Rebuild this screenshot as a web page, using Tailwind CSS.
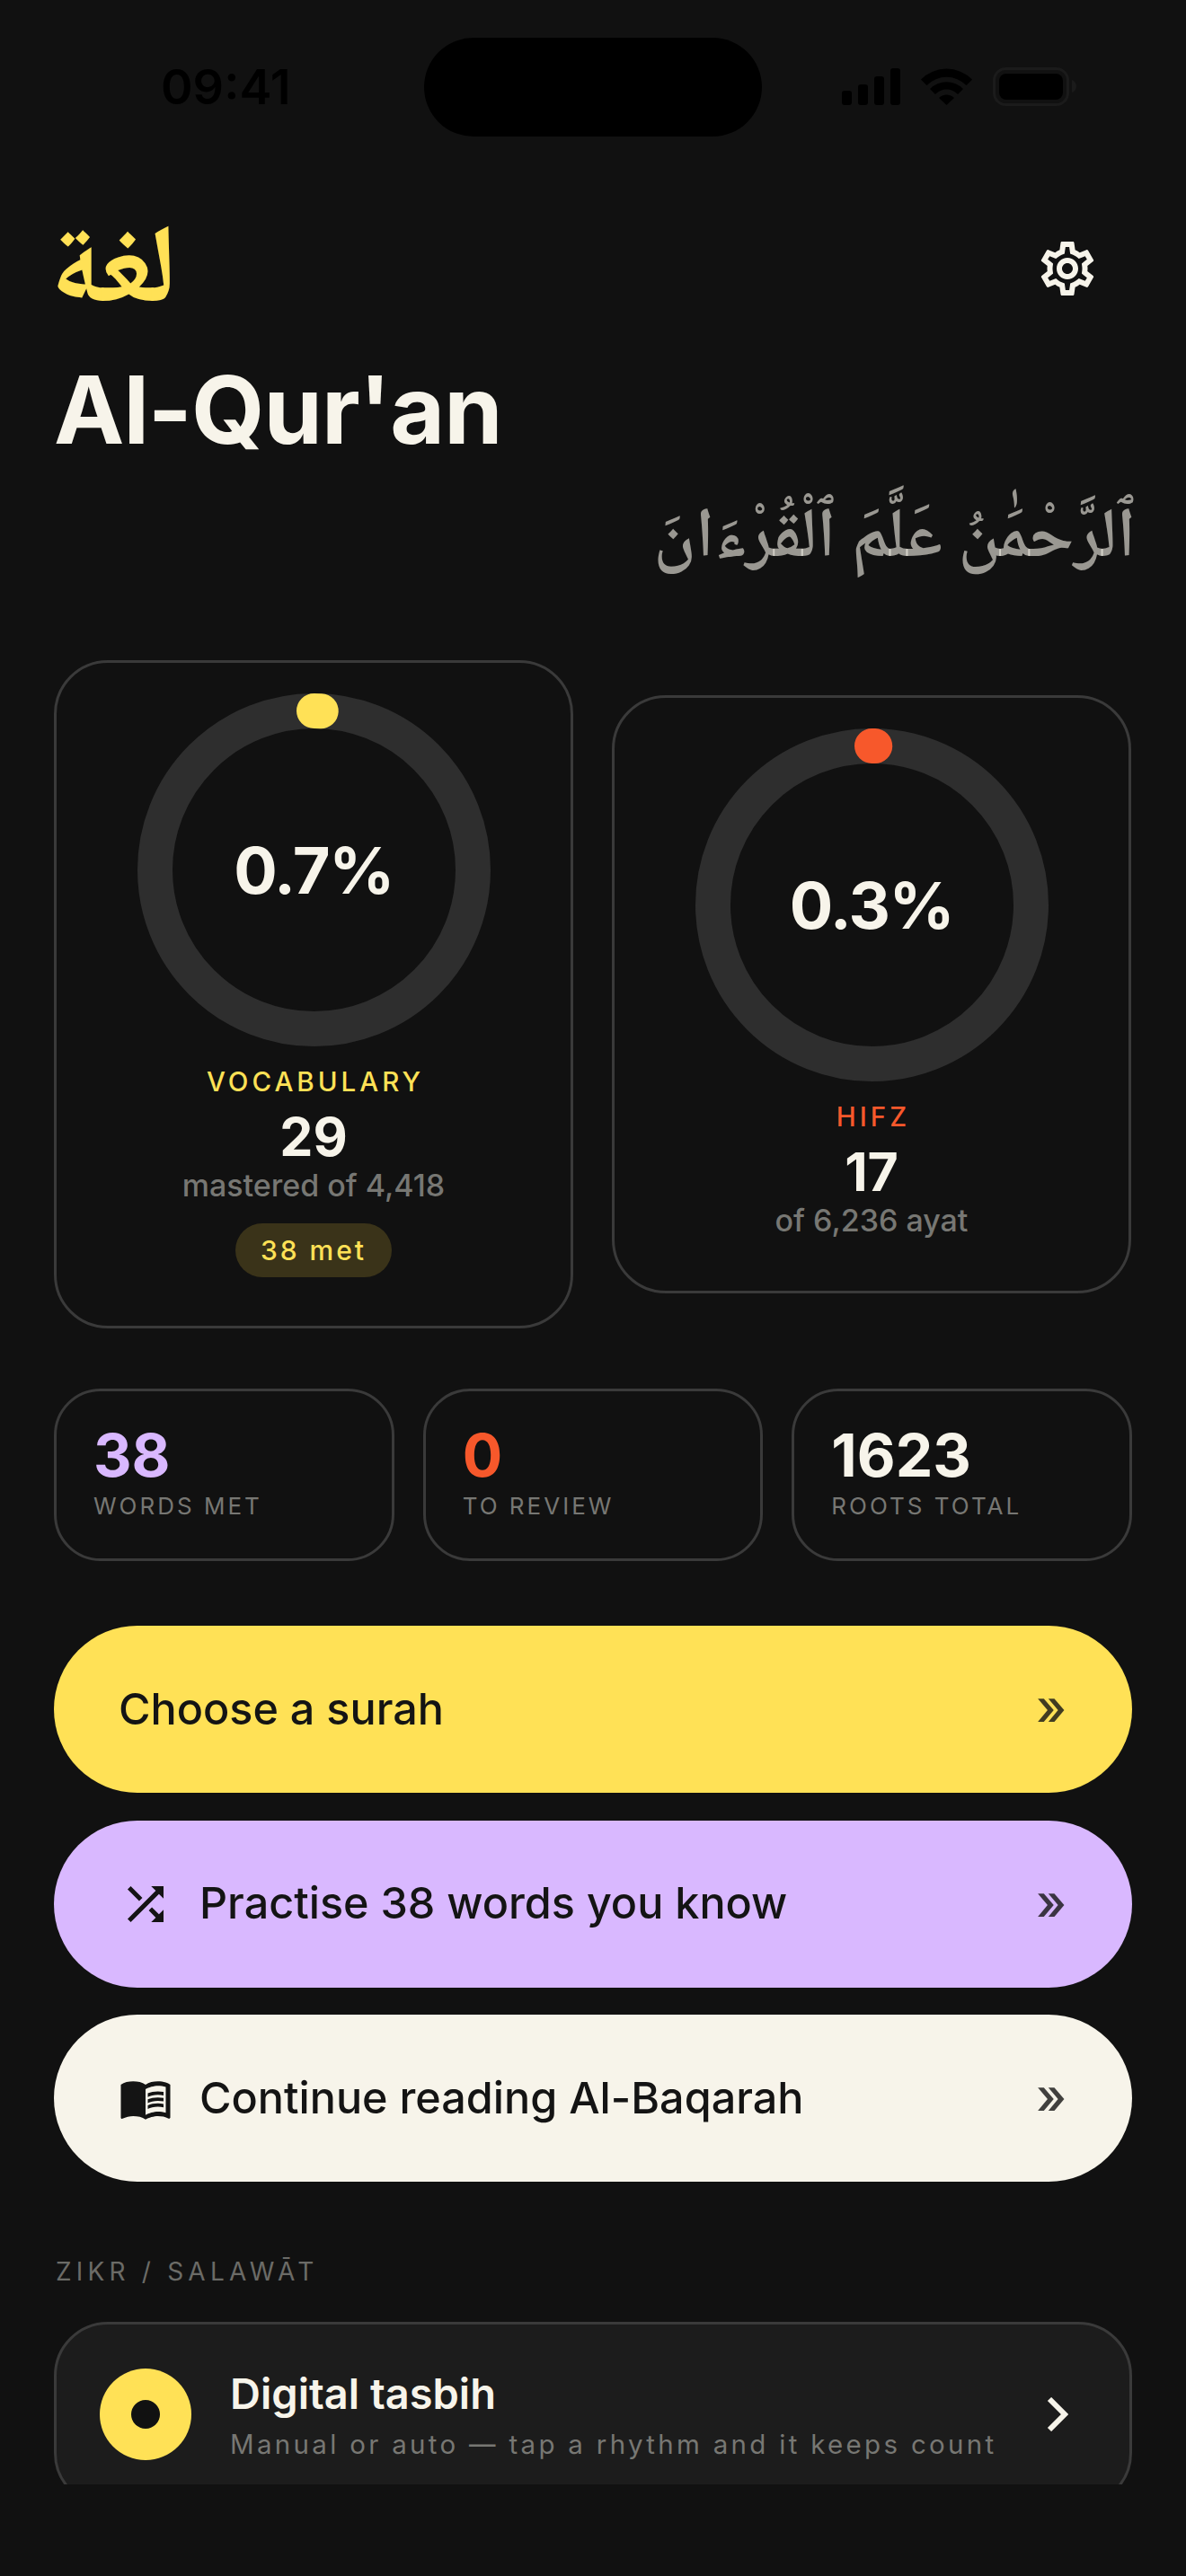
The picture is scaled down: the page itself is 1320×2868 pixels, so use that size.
<!DOCTYPE html>
<html lang="en">
<head>
  <meta charset="UTF-8" />
  <meta name="viewport" content="width=device-width, initial-scale=1.0" />
  <title>Al-Qur'an</title>
  <script src="https://cdn.jsdelivr.net/npm/@tailwindcss/browser@4"></script>
</head>
<body class="bg-[#111111] font-['Inter',sans-serif] text-[#f7f4ea]">
  <div class="w-[1320px] h-[2868px]">
    <div class="relative h-[2766px] overflow-hidden px-[60px]">

      <!-- status bar -->
      <div class="absolute left-[472px] top-[42px] w-[376px] h-[110px] rounded-full bg-black"></div>
      <div class="flex h-[242px] items-start justify-between pt-[70px]">
        <span class="pl-[119px] text-[54px] leading-[54px] font-semibold text-black">09:41</span>
        <svg class="mr-[60px] mt-[5px]" width="263" height="44" viewBox="937 75 263 44" fill="#000">
          <rect x="937" y="101" width="11" height="16" rx="3" />
          <rect x="955" y="94" width="11" height="23" rx="3" />
          <rect x="973" y="85" width="11" height="32" rx="3" />
          <rect x="991" y="76" width="11" height="41" rx="3" />
          <path d="M1025 88.500A40 40 0 0 1 1082 88.500L1075.500 95A31 31 0 0 0 1031.500 95ZM1035 99A26 26 0 0 1 1072 99L1066 105A17 17 0 0 0 1041 105ZM1045 109A12 12 0 0 1 1062 109L1053.500 117Z" />
          <rect x="1106.500" y="76.500" width="82" height="40" rx="13" fill="none" stroke="#1b1b1b" stroke-width="3" />
          <rect x="1112" y="82" width="71" height="29" rx="8" />
          <path d="M1193 89C1196 90 1198 93 1198 96C1198 99 1196 102 1193 103Z" fill="#1b1b1b" />
        </svg>
      </div>

      <!-- header -->
      <div class="flex h-[114px] items-center justify-between">
        <span dir="rtl" class="ml-[-4px] mt-[20px] font-['Noto_Naskh_Arabic',serif] text-[124px] leading-[114px] font-bold text-[#ffe156]">لغة</span>
        <svg class="mr-[36px]" width="72" height="72" viewBox="0 0 24 24" fill="#f7f4ea"><path d="M19.43 12.980c.04-.32.07-.64.07-.98 0-.34-.03-.66-.07-.98l2.110-1.650c.19-.15.24-.42.12-.64l-2-3.460c-.09-.16-.26-.25-.44-.25-.06 0-.12.01-.17.03l-2.490 1c-.52-.4-1.080-.73-1.690-.98l-.38-2.650C14.460 2.180 14.250 2 14 2h-4c-.25 0-.46.18-.49.42l-.38 2.650c-.61.25-1.170.59-1.690.98l-2.490-1c-.06-.02-.12-.03-.18-.03-.17 0-.34.09-.43.25l-2 3.460c-.13.22-.07.49.12.64l2.110 1.650c-.04.32-.07.65-.07.98 0 .33.03.66.07.98l-2.110 1.650c-.19.15-.24.42-.12.64l2 3.460c.09.16.26.25.44.25.06 0 .12-.01.17-.03l2.490-1c.52.4 1.080.73 1.690.98l.38 2.650c.03.24.24.42.49.42h4c.25 0 .46-.18.49-.42l.38-2.650c.61-.25 1.170-.59 1.690-.98l2.490 1c.06.02.12.03.18.03.17 0 .34-.09.43-.25l2-3.460c.12-.22.07-.49-.12-.64l-2.110-1.650zm-1.980-1.710c.04.31.05.52.05.73 0 .21-.02.43-.05.73l-.14 1.130.89.7 1.080.84-.7 1.210-1.270-.51-1.040-.42-.9.68c-.43.32-.84.56-1.250.73l-1.060.43-.16 1.130-.2 1.350h-1.400l-.19-1.350-.16-1.130-1.060-.43c-.43-.18-.83-.41-1.230-.71l-.91-.7-1.060.43-1.270.51-.7-1.210 1.080-.84.89-.7-.14-1.130c-.03-.31-.05-.54-.05-.74s.02-.43.05-.73l.14-1.130-.89-.7-1.080-.84.7-1.210 1.270.51 1.040.42.9-.68c.43-.32.84-.56 1.250-.73l1.060-.43.16-1.130.2-1.350h1.390l.19 1.350.16 1.130 1.060.43c.43.18.83.41 1.230.71l.91.7 1.060-.43 1.270-.51.7 1.210-1.070.85-.89.7.14 1.130zM12 8c-2.210 0-4 1.790-4 4s1.790 4 4 4 4-1.790 4-4-1.790-4-4-4zm0 6c-1.100 0-2-.9-2-2s.9-2 2-2 2 .9 2 2-.9 2-2 2z" /></svg>
      </div>

      <h1 class="mt-[40px] text-[105px] leading-[120px] font-bold tracking-[-1px]">Al-Qur'an</h1>

      <p dir="rtl" class="mt-[31px] mr-[-4px] font-['Noto_Naskh_Arabic',serif] text-[78px] leading-[110px] font-semibold text-[#f7f4ea]/60">ٱلرَّحْمَٰنُ عَلَّمَ ٱلْقُرْءَانَ</p>

      <!-- progress cards -->
      <div class="mt-[78px] flex items-center gap-[43px]">
        <div class="flex w-[578px] flex-col items-center rounded-[60px] border-[3px] border-[#3a3a3a] pt-[34px] pb-[54px]">
          <div class="relative h-[393px] w-[393px]">
            <svg width="393" height="393" viewBox="0 0 393 393" fill="none">
              <circle cx="196.500" cy="196.500" r="177" stroke="#2e2e2e" stroke-width="39" />
              <circle cx="196.500" cy="196.500" r="177" stroke="#ffe156" stroke-width="39" stroke-linecap="round" stroke-dasharray="7.800 1112" transform="rotate(-90 196.500 196.500)" />
            </svg>
            <div class="absolute inset-0 flex items-center justify-center text-[72px] font-bold tracking-[-1.500px]">0.7%</div>
          </div>
          <div class="mt-[19px] pl-[4px] text-[29.500px] leading-[40px] font-medium tracking-[4px] text-[#ffe156]">VOCABULARY</div>
          <div class="mt-[12px] text-[59px] leading-[60px] font-bold">29</div>
          <div class="mt-[2px] text-[34px] leading-[44px] font-medium text-[#777773]">mastered of 4,418</div>
          <div class="mt-[20px] flex h-[60px] w-[174px] items-center justify-center rounded-full bg-[#3a3319] text-[30px] font-medium tracking-[3px] text-[#ffe156]">38 met</div>
        </div>

        <div class="flex w-[578px] flex-col items-center rounded-[60px] border-[3px] border-[#3a3a3a] pt-[34px] pb-[56px]">
          <div class="relative h-[393px] w-[393px]">
            <svg width="393" height="393" viewBox="0 0 393 393" fill="none">
              <circle cx="196.500" cy="196.500" r="177" stroke="#2e2e2e" stroke-width="39" />
              <circle cx="196.500" cy="196.500" r="177" stroke="#f7582b" stroke-width="39" stroke-linecap="round" stroke-dasharray="3.300 1112" transform="rotate(-90 196.500 196.500)" />
            </svg>
            <div class="absolute inset-0 flex items-center justify-center text-[72px] font-bold tracking-[-1.500px]">0.3%</div>
          </div>
          <div class="mt-[19px] pl-[4px] text-[29.500px] leading-[40px] font-medium tracking-[4px] text-[#f7582b]">HIFZ</div>
          <div class="mt-[12px] text-[59px] leading-[60px] font-bold">17</div>
          <div class="mt-[2px] text-[34px] leading-[44px] font-medium text-[#777773]">of 6,236 ayat</div>
        </div>
      </div>

      <!-- stats -->
      <div class="mt-[67px] grid grid-cols-3 gap-[32px]">
        <div class="h-[192px] rounded-[52px] border-[3px] border-[#3a3a3a] pl-[41px] pt-[31px]">
          <div class="text-[66px] leading-[80px] font-bold text-[#d9b8ff]">38</div>
          <div class="mt-[1px] text-[26px] leading-[32px] tracking-[3px] text-[#777773]">WORDS MET</div>
        </div>
        <div class="h-[192px] rounded-[52px] border-[3px] border-[#3a3a3a] pl-[41px] pt-[31px]">
          <div class="text-[66px] leading-[80px] font-bold text-[#f7582b]">0</div>
          <div class="mt-[1px] text-[26px] leading-[32px] tracking-[3px] text-[#777773]">TO REVIEW</div>
        </div>
        <div class="h-[192px] rounded-[52px] border-[3px] border-[#3a3a3a] pl-[41px] pt-[31px]">
          <div class="text-[66px] leading-[80px] font-bold">1623</div>
          <div class="mt-[1px] text-[26px] leading-[32px] tracking-[3px] text-[#777773]">ROOTS TOTAL</div>
        </div>
      </div>

      <!-- actions -->
      <div class="mt-[72px] flex flex-col gap-[30.500px] text-[48.500px] font-medium text-[#141414]">
        <div class="flex h-[186px] items-center justify-between rounded-full bg-[#ffe156] pl-[72px] pr-[73px]">
          <span>Choose a surah</span>
          <span class="mt-[-4px] text-[56px] leading-none opacity-80">»</span>
        </div>
        <div class="flex h-[186px] items-center justify-between rounded-full bg-[#d9b8ff] pl-[72px] pr-[73px]">
          <span class="flex items-center gap-[30px]">
            <svg width="60" height="60" viewBox="0 0 24 24" fill="#141414"><path d="M10.590 9.170L5.410 4 4 5.410l5.170 5.170 1.420-1.410zM14.500 4l2.040 2.040L4 18.590 5.410 20 17.960 7.460 20 9.500V4h-5.500zm.33 9.410l-1.410 1.410 3.130 3.130L14.500 20H20v-5.500l-2.040 2.040-3.130-3.130z" /></svg>
            Practise 38 words you know
          </span>
          <span class="mt-[-4px] text-[56px] leading-none opacity-80">»</span>
        </div>
        <div class="flex h-[186px] items-center justify-between rounded-full bg-[#f7f4ea] pl-[72px] pr-[73px]">
          <span class="flex items-center gap-[30px]">
            <svg width="60" height="60" viewBox="0 0 24 24" fill="#141414"><path d="M21 5c-1.110-.35-2.330-.5-3.500-.5-1.950 0-4.050.4-5.500 1.500-1.450-1.100-3.550-1.500-5.500-1.500S2.450 4.900 1 6v14.650c0 .25.25.5.5.5.1 0 .15-.05.25-.05C3.100 20.450 5.050 20 6.500 20c1.950 0 4.050.4 5.500 1.500 1.350-.85 3.800-1.500 5.500-1.500 1.650 0 3.350.3 4.750 1.050.1.05.15.05.25.05.25 0 .5-.25.5-.5V6c-.6-.45-1.250-.75-2-1zm0 13.500c-1.100-.35-2.300-.5-3.500-.5-1.700 0-4.150.65-5.500 1.500V8c1.350-.85 3.800-1.500 5.500-1.500 1.200 0 2.400.15 3.500.5v11.500z" /><path d="M17.500 10.500c.88 0 1.730.09 2.500.26V9.240c-.79-.15-1.640-.24-2.500-.24-1.700 0-3.240.29-4.500.83v1.660c1.130-.64 2.700-.99 4.500-.99zM13 12.490v1.660c1.130-.64 2.700-.99 4.500-.99.88 0 1.730.09 2.500.26V11.900c-.79-.15-1.640-.24-2.500-.24-1.700 0-3.240.3-4.500.83zM17.500 14.330c-1.700 0-3.240.29-4.500.83v1.660c1.130-.64 2.700-.99 4.500-.99.88 0 1.730.09 2.500.26v-1.520c-.79-.16-1.640-.24-2.500-.24z" /></svg>
            Continue reading Al-Baqarah
          </span>
          <span class="mt-[-4px] text-[56px] leading-none opacity-80">»</span>
        </div>
      </div>

      <!-- zikr -->
      <div class="mt-[82px] pl-[2px] text-[28px] leading-[36px] tracking-[5.200px] text-[#6b6b67]">ZIKR / SALAWĀT</div>
      <div class="mt-[38px] flex h-[206px] items-center rounded-[60px] border-[3px] border-[#3a3a3a] bg-[#1c1c1c] pl-[48px] pr-[68px]">
        <div class="flex h-[102px] w-[102px] shrink-0 items-center justify-center rounded-full bg-[#ffe156]">
          <div class="h-[32px] w-[32px] rounded-full bg-[#111111]"></div>
        </div>
        <div class="ml-[43px] flex-1">
          <div class="text-[47px] leading-[56px] font-semibold">Digital tasbih</div>
          <div class="mt-[10px] text-[29.500px] leading-[36px] tracking-[3.300px] text-[#777773]">Manual or auto — tap a rhythm and it keeps count</div>
        </div>
        <svg width="24" height="38" viewBox="0 0 24 38" fill="none" stroke="#f7f4ea" stroke-width="6"><path d="M3 2L20 19L3 36" /></svg>
      </div>
    </div>
  </div>
</body>
</html>
